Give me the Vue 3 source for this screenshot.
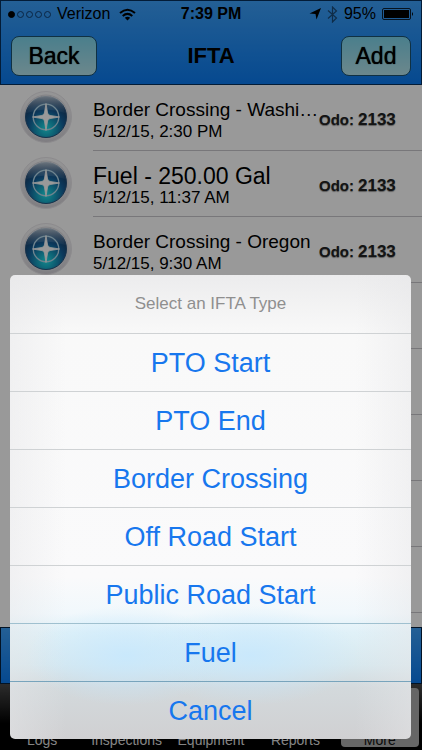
<template>
  <div class="screen">
    <header class="header">
      <div class="status-bar">
        <div class="status-left">
          <span class="signal">
            <i v-for="n in 5" :key="n" :class="{ on: n === 1 }"></i>
          </span>
          <span>Verizon</span>
          <svg width="17" height="13" viewBox="0 0 17 13" fill="none" stroke="#000" stroke-width="2">
            <path d="M1 5 Q8.500 -1.500 16 5" />
            <path d="M3.700 8 Q8.500 3.800 13.300 8" />
            <path d="M8.500 12.500 L5.800 9.800 Q8.500 7.700 11.200 9.800 Z" fill="#000" stroke="none" />
          </svg>
        </div>
        <strong class="clock">7:39 PM</strong>
        <div class="status-right">
          <svg width="12" height="12" viewBox="0 0 12 12"><path d="M12 0 L7.500 11.500 L6.500 6 L0.500 5.500 Z" /></svg>
          <svg class="bluetooth" width="11" height="17" viewBox="0 0 11 17" fill="none" stroke="#000" stroke-width="1.200">
            <path d="M1 4.500 L9.500 12 L5.500 16 V1 L9.500 5 L1 12.500" />
          </svg>
          <span>95%</span>
          <svg width="32" height="12" viewBox="0 0 32 12">
            <rect x="0.500" y="0.500" width="28" height="11" rx="1.500" fill="none" stroke="#000" stroke-width="0.800" />
            <rect x="2" y="2" width="25" height="8" />
            <path d="M30 4 Q32 6 30 8 Z" />
          </svg>
        </div>
      </div>
      <nav class="nav-bar">
        <button type="button" class="nav-button back">Back</button>
        <h1>IFTA</h1>
        <button type="button" class="nav-button add">Add</button>
      </nav>
    </header>

    <ul class="list">
      <li v-for="entry in entries" :key="entry.date" class="row">
        <svg class="badge" width="54" height="54" viewBox="0 0 54 54">
          <defs>
            <radialGradient id="ball" cx="50%" cy="78%" r="66%">
              <stop offset="0" stop-color="#20e4ea" />
              <stop offset="0.300" stop-color="#18a9c6" />
              <stop offset="0.650" stop-color="#14609a" />
              <stop offset="1" stop-color="#173d66" />
            </radialGradient>
            <linearGradient id="gloss" x1="0" y1="0" x2="0" y2="1">
              <stop offset="0" stop-color="#fff" stop-opacity="0.700" />
              <stop offset="1" stop-color="#8ab8e0" stop-opacity="0.100" />
            </linearGradient>
            <linearGradient id="rim" x1="0" y1="0" x2="0" y2="1">
              <stop offset="0" stop-color="#fafafb" />
              <stop offset="1" stop-color="#d4d2d8" />
            </linearGradient>
          </defs>
          <circle cx="27" cy="27" r="25.500" fill="url(#rim)" stroke="#e9e7eb" />
          <circle cx="27" cy="27" r="22.500" fill="#dcdce1" />
          <circle cx="27" cy="27" r="20.500" fill="url(#ball)" stroke="#28527c" />
          <path d="M8 23 C8 0 46 0 46 23 Q27 16 8 23 Z" fill="url(#gloss)" />
          <circle cx="27" cy="27" r="12.800" fill="none" stroke="#b9dced" stroke-width="1.300" />
          <path d="M27 13.500 L28.600 23 Q29 25 31 25.400 L40.500 27 L31 28.600 Q29 29 28.600 31 L27 40.500 L25.400 31 Q25 29 23 28.600 L13.500 27 L23 25.400 Q25 25 25.400 23 Z" fill="#fff" stroke="#fff" stroke-width="0.800" />
        </svg>
        <div class="row-body">
          <div class="info">
            <div class="name" :class="{ large: entry.large }">{{ entry.name }}</div>
            <div class="date">{{ entry.date }}</div>
          </div>
          <div class="odo"><span>Odo:</span><b>{{ entry.odo }}</b></div>
        </div>
      </li>
      <li v-for="n in 5" :key="n" class="row"><div class="row-body empty"></div></li>
    </ul>

    <div class="toolbar"></div>
    <nav class="tab-bar">
      <a v-for="tab in tabs" :key="tab" href="#" :class="{ active: tab === 'More' }">{{ tab }}</a>
    </nav>

    <div class="backdrop"></div>
    <div class="sheet" role="dialog" aria-labelledby="sheet-title">
      <h2 id="sheet-title">Select an IFTA Type</h2>
      <button v-for="option in options" :key="option" type="button">{{ option }}</button>
    </div>
  </div>
</template>

<script setup>
const entries = [
  { name: 'Border Crossing - Washi…', date: '5/12/15, 2:30 PM', odo: 2133 },
  { name: 'Fuel - 250.00 Gal', date: '5/12/15, 11:37 AM', odo: 2133, large: true },
  { name: 'Border Crossing - Oregon', date: '5/12/15, 9:30 AM', odo: 2133 },
];

const tabs = ['Logs', 'Inspections', 'Equipment', 'Reports', 'More'];

const options = [
  'PTO Start',
  'PTO End',
  'Border Crossing',
  'Off Road Start',
  'Public Road Start',
  'Fuel',
  'Cancel',
];
</script>

<style>
body {
  margin: 0;
}
</style>

<style scoped>
.screen {
  position: relative;
  display: flex;
  flex-direction: column;
  min-height: 100vh;
  overflow: hidden;
  background: #fff;
  color: #000;
  font-family: "Liberation Sans", Arial, sans-serif;
}

.screen * {
  box-sizing: border-box;
}

.header {
  height: 85px;
  border: 1px solid #06305c;
  background: linear-gradient(#3c9ff8, #0a7af0);
}

.status-bar {
  display: grid;
  grid-template-columns: 1fr auto 1fr;
  align-items: center;
  height: 26px;
  padding: 0 7px;
  font-size: 16px;
}

.status-left,
.status-right {
  display: flex;
  align-items: center;
  gap: 6px;
}

.status-left svg {
  margin-left: 3px;
}

.status-right {
  justify-content: flex-end;
}

.bluetooth {
  opacity: 0.5;
}

.signal {
  display: flex;
  gap: 2px;
}

.signal i {
  width: 7px;
  height: 7px;
  border: 1px solid #123f70;
  border-radius: 50%;
}

.signal .on {
  background: #000;
  border-color: #000;
}

.clock {
  font-size: 16px;
}

.nav-bar {
  display: grid;
  grid-template-columns: 1fr auto 1fr;
  align-items: center;
  height: 58px;
  padding: 0 10px;
}

.nav-bar h1 {
  margin: 0;
  font-size: 22px;
}

.nav-button {
  height: 40px;
  padding: 0;
  border: 1px solid #1b5270;
  border-radius: 8px;
  background: linear-gradient(#7cd3ea, #b4e2ea);
  color: #000;
  font-family: inherit;
  font-size: 23px;
  text-shadow: 0 0 1px #000;
}

.back {
  width: 86px;
}

.add {
  justify-self: end;
  width: 70px;
}

.list {
  flex: 1;
  margin: 0;
  padding: 0;
  list-style: none;
}

.row {
  display: flex;
  height: 66px;
}

.badge {
  flex: none;
  margin: 5px 0 0 19px;
}

.row-body {
  display: flex;
  flex: 1;
  align-items: center;
  min-width: 0;
  margin-left: 20px;
  border-bottom: 1px solid #c8c7cc;
}

.empty {
  margin-left: 93px;
}

.info {
  flex: 1;
  min-width: 0;
  padding-top: 5px;
}

.name {
  overflow: hidden;
  font-size: 19px;
  line-height: 24px;
  text-overflow: ellipsis;
  white-space: nowrap;
}

.large {
  font-size: 23px;
}

.date {
  font-size: 17px;
  line-height: 20px;
}

.odo {
  display: flex;
  align-items: baseline;
  gap: 4px;
  width: 103px;
  padding-top: 4px;
  color: #222;
  font-size: 15px;
  font-weight: bold;
  text-shadow: 0 1px 1px #999;
}

.odo b {
  font-size: 17px;
}

.toolbar {
  height: 57px;
  border: 1px solid #04203f;
  background: linear-gradient(#3c9ff8, #0a7af0);
}

.tab-bar {
  display: grid;
  grid-template-columns: repeat(5, 1fr);
  height: 66px;
  background: linear-gradient(#4a4a4a, #000 60%);
}

.tab-bar a {
  display: flex;
  align-items: flex-end;
  justify-content: center;
  margin: 4px 3px 3px;
  color: #ddd;
  font-size: 14px;
  line-height: 14px;
  text-decoration: none;
}

.tab-bar .active {
  border-radius: 4px;
  background: #aaa;
  color: #111;
}

.backdrop {
  position: absolute;
  inset: 0;
  background: rgba(0, 0, 0, 0.4);
}

.sheet {
  position: absolute;
  right: 11px;
  bottom: 11px;
  left: 10px;
  overflow: hidden;
  border-radius: 5px;
  background:
    radial-gradient(ellipse 100px 50px at 29% 82%, #c5e8ffcc, #c5e8ff00),
    radial-gradient(ellipse 110px 50px at 60% 82%, #c5e8ffcc, #c5e8ff00),
    linear-gradient(90deg, #e6e6e877, #e6e6e800 14%, #e6e6e800 86%, #e6e6e877),
    linear-gradient(#ececed, #f9f9f9 13%, #fafafb 65%, #f1f8fc 73%, #e0f1f8 77%, #d8e8ee 84%, #d3d9dc 89%, #d0d0d2);
}

.sheet h2 {
  margin: 0;
  color: #8f8f8f;
  font-size: 17px;
  font-weight: normal;
  line-height: 58px;
  text-align: center;
}

.sheet button {
  display: block;
  width: 100%;
  height: 58px;
  padding: 2px 0 0;
  border: 0;
  border-top: 1px solid #cfd2d4;
  background: none;
  color: #1777ee;
  font-family: inherit;
  font-size: 27px;
}

.sheet button:nth-last-child(2) {
  border-color: #9fc0cf;
}

.sheet button:last-child {
  border-color: #78a4bc;
}
</style>
